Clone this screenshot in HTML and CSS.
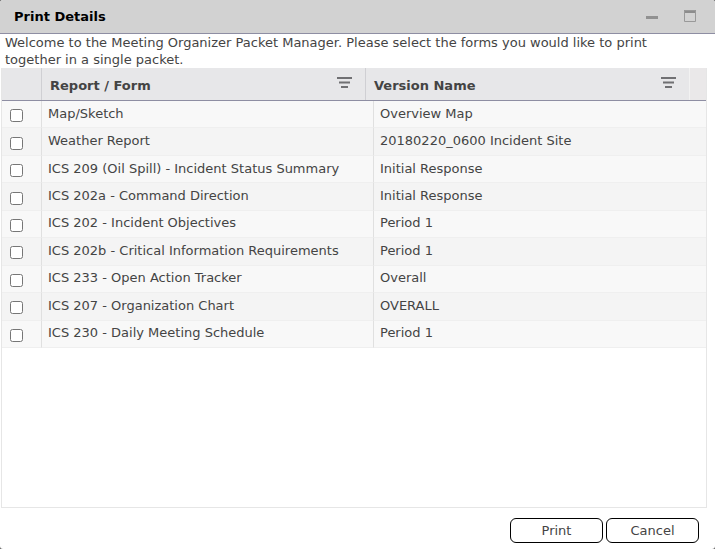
FILE: index.html
```html
<!DOCTYPE html>
<html lang="en">
<head>
    <meta charset="UTF-8">
    <meta name="viewport" content="width=device-width, initial-scale=1.0">
    <title>Print Details</title>
    <link rel="stylesheet" href="styles.css">
</head>
<body>
<div class="window">
    <div class="titlebar">
        <h1>Print Details</h1>
        <button class="winbtn" type="button" aria-label="Minimize">
            <svg width="12" height="12" viewBox="0 0 12 12"><path d="M0 6h12v3H0z" fill="#919191"/></svg>
        </button>
        <button class="winbtn" type="button" aria-label="Maximize">
            <svg width="12" height="12" viewBox="0 0 12 12"><path d="M0 0h12v3H0z" fill="#8c8c8c"/><path d="M.5 .5h11v11H.5z" fill="none" stroke="#999"/></svg>
        </button>
    </div>

    <p class="intro">Welcome to the Meeting Organizer Packet Manager. Please select the forms you would like to print together in a single packet.</p>

    <div class="grid">
        <div class="grid-header">
            <table>
                <colgroup><col class="col-check"><col><col></colgroup>
                <thead>
                    <tr>
                        <th></th>
                        <th><div class="head"><a href="#">Report / Form</a>
                            <button class="filter" type="button" aria-label="Filter Report / Form"><svg width="15" height="12" viewBox="0 0 15 12"><path d="M0 1h15M2 5.500h11M4 10h7" stroke="#707073" stroke-width="2"/></svg></button></div></th>
                        <th><div class="head"><a href="#">Version Name</a>
                            <button class="filter" type="button" aria-label="Filter Version Name"><svg width="15" height="12" viewBox="0 0 15 12"><path d="M0 1h15M2 5.500h11M4 10h7" stroke="#707073" stroke-width="2"/></svg></button></div></th>
                    </tr>
                </thead>
            </table>
        </div>
        <div class="grid-content">
            <table>
                <colgroup><col class="col-check"><col><col></colgroup>
                <tbody>
                    <tr><td><input type="checkbox" id="f1"></td><td><label for="f1">Map/Sketch</label></td><td>Overview Map</td></tr>
                    <tr><td><input type="checkbox" id="f2"></td><td><label for="f2">Weather Report</label></td><td>20180220_0600 Incident Site</td></tr>
                    <tr><td><input type="checkbox" id="f3"></td><td><label for="f3">ICS 209 (Oil Spill) - Incident Status Summary</label></td><td>Initial Response</td></tr>
                    <tr><td><input type="checkbox" id="f4"></td><td><label for="f4">ICS 202a - Command Direction</label></td><td>Initial Response</td></tr>
                    <tr><td><input type="checkbox" id="f5"></td><td><label for="f5">ICS 202 - Incident Objectives</label></td><td>Period 1</td></tr>
                    <tr><td><input type="checkbox" id="f6"></td><td><label for="f6">ICS 202b - Critical Information Requirements</label></td><td>Period 1</td></tr>
                    <tr><td><input type="checkbox" id="f7"></td><td><label for="f7">ICS 233 - Open Action Tracker</label></td><td>Overall</td></tr>
                    <tr><td><input type="checkbox" id="f8"></td><td><label for="f8">ICS 207 - Organization Chart</label></td><td>OVERALL</td></tr>
                    <tr><td><input type="checkbox" id="f9"></td><td><label for="f9">ICS 230 - Daily Meeting Schedule</label></td><td>Period 1</td></tr>
                </tbody>
            </table>
        </div>
    </div>

    <div class="actions">
        <button type="button">Print</button>
        <button type="button">Cancel</button>
    </div>
</div>
</body>
</html>
```
FILE: styles.css
```css
* {
    box-sizing: border-box;
}

body {
    margin: 0;
    background: #666;
    color: #444;
    font: 13px/17px Verdana, "DejaVu Sans", sans-serif;
}

.window {
    display: flex;
    flex-direction: column;
    min-height: 100vh;
    background: #fff;
    border-radius: 3px;
    overflow: hidden;
}

.titlebar {
    display: flex;
    align-items: center;
    gap: 26px;
    height: 34px;
    padding: 0 19px 2px 14px;
    background: #d2d2d2;
    border-bottom: 1px solid #8e8ea3;
}

.titlebar h1 {
    flex: 1;
    margin: 0;
    padding-top: 2px;
    color: #000;
    font-size: 13px;
}

.winbtn,
.filter {
    display: flex;
    padding: 0;
    background: none;
    border: 0;
    cursor: pointer;
}

.intro {
    margin: 0;
    padding: 0 48px 0 5px;
}

.grid {
    flex: 1;
    display: flex;
    flex-direction: column;
    margin: 0 8px 0 1px;
    border: 1px solid #e6e6e6;
    border-top: 0;
}

.grid-header {
    padding-right: 16px;
    background: #eae8e9;
    border-bottom: 1px solid #8e8ea3;
}

table {
    width: 100%;
    table-layout: fixed;
    border-collapse: separate;
    border-spacing: 0;
}

.col-check {
    width: 40px;
}

th {
    height: 32px;
    padding: 2px 13px 0 8px;
    background: #e7e7e9;
    border-right: 1px solid #cfcfd3;
    text-align: left;
}

th:last-child {
    border-right-color: #f2f2f2;
}

.head {
    display: flex;
    align-items: center;
    justify-content: space-between;
}

.head a {
    color: #444;
    text-decoration: none;
}

.filter {
    padding-bottom: 4px;
}

.grid-content table {
    height: 247px;
}

td {
    padding: 0 6px 2px;
    background: #f8f8f8;
    border-right: 1px solid #e0e0e0;
    border-bottom: 1px solid #efefef;
}

td:first-child {
    padding: 3px 8px 0;
}

td:last-child {
    border-right: 0;
}

tr:nth-child(even) td {
    background: #f4f4f4;
}

td input {
    display: block;
    width: 13px;
    height: 13px;
    margin: 0;
}

.actions {
    display: flex;
    justify-content: flex-end;
    gap: 3px;
    padding: 10px 16px 6px;
}

.actions button {
    width: 93px;
    height: 25px;
    padding: 0;
    background: #fff;
    border: 1px solid #000;
    border-radius: 6px;
    color: #444;
    font: inherit;
    cursor: pointer;
}
```
